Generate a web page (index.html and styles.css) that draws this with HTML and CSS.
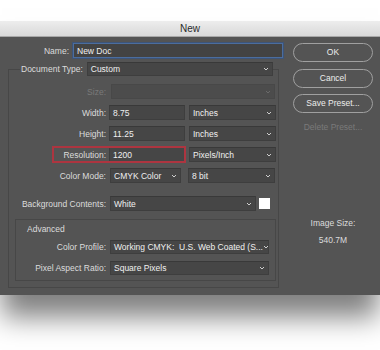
FILE: index.html
```html
<!DOCTYPE html>
<html>
	<head>
		<meta charset="UTF-8">
		<title>New</title>
		<link rel="stylesheet" href="styles.css">
	</head>
	<body>
		<div class="window">
			<div class="titlebar">New</div>
			<div class="dialog">
				<div class="form">
					<div class="row name-row">
						<span class="lbl">Name:</span>
						<div class="field focus">New Doc</div>
					</div>
					<fieldset class="group">
						<legend class="legend">
							<span class="lbl">Document Type:</span>
							<div class="field select doc">Custom<svg class="chev" viewBox="0 0 6 4"><path d="M1 1l2 2 2-2"/></svg></div>
						</legend>
						<div class="row first">
							<span class="lbl off">Size:</span>
							<div class="field select off size"><svg class="chev" viewBox="0 0 6 4"><path d="M1 1l2 2 2-2"/></svg></div>
						</div>
						<div class="row">
							<span class="lbl">Width:</span>
							<div class="field num">8.75</div>
							<div class="field select unit">Inches<svg class="chev" viewBox="0 0 6 4"><path d="M1 1l2 2 2-2"/></svg></div>
						</div>
						<div class="row">
							<span class="lbl">Height:</span>
							<div class="field num">11.25</div>
							<div class="field select unit">Inches<svg class="chev" viewBox="0 0 6 4"><path d="M1 1l2 2 2-2"/></svg></div>
						</div>
						<div class="row res">
							<span class="mark"></span>
							<span class="lbl">Resolution:</span>
							<div class="field num">1200</div>
							<div class="field select unit">Pixels/Inch<svg class="chev" viewBox="0 0 6 4"><path d="M1 1l2 2 2-2"/></svg></div>
						</div>
						<div class="row">
							<span class="lbl">Color Mode:</span>
							<div class="field select mode">CMYK Color<svg class="chev" viewBox="0 0 6 4"><path d="M1 1l2 2 2-2"/></svg></div>
							<div class="field select unit">8 bit<svg class="chev" viewBox="0 0 6 4"><path d="M1 1l2 2 2-2"/></svg></div>
						</div>
						<div class="row bg-row">
							<span class="lbl">Background Contents:</span>
							<div class="field select bg">White<svg class="chev" viewBox="0 0 6 4"><path d="M1 1l2 2 2-2"/></svg></div>
							<span class="swatch"></span>
						</div>
						<div class="advanced">
							<div class="adv-title">Advanced</div>
							<div class="row adv-row first">
								<span class="lbl">Color Profile:</span>
								<div class="field select wide">Working CMYK:&nbsp; U.S. Web Coated (S...<svg class="chev" viewBox="0 0 6 4"><path d="M1 1l2 2 2-2"/></svg></div>
							</div>
							<div class="row adv-row">
								<span class="lbl">Pixel Aspect Ratio:</span>
								<div class="field select wide">Square Pixels<svg class="chev" viewBox="0 0 6 4"><path d="M1 1l2 2 2-2"/></svg></div>
							</div>
						</div>
					</fieldset>
				</div>
				<div class="side">
					<div class="btn ok">OK</div>
					<div class="btn">Cancel</div>
					<div class="btn">Save Preset...</div>
					<div class="btn-off">Delete Preset...</div>
					<div class="size-title">Image Size:</div>
					<div class="size-val">540.7M</div>
				</div>
			</div>
		</div>
	</body>
</html>
```
FILE: styles.css
```css
*{
	margin: 0;
	padding: 0;
	box-sizing: border-box;
}
html,body{
	height: 100%;
}
body{
	background: #FFFFFF;
	font-family: "Liberation Sans", Arial, sans-serif;
	font-size: 8.5px;
	color: #dcdcdc;
}
.window{
	margin-top: 21px;
	width: 380px;
	box-shadow: 0 24px 26px -2px rgba(0,0,0,0.5);
}
.titlebar{
	height: 16px;
	line-height: 15px;
	text-align: center;
	font-size: 10px;
	color: #2b2b2b;
	background: linear-gradient(#ededed, #d9d9d9);
	border-bottom: 1px solid #a8a8a8;
}
.dialog{
	display: flex;
	height: 258px;
	background: #545454;
}
.form{
	width: 283px;
	padding-top: 6px;
}
.row{
	display: flex;
	align-items: center;
	height: 15px;
	margin-top: 6px;
	position: relative;
}
.row.first{
	margin-top: 0;
}
.lbl{
	flex: none;
	width: 97px;
	margin-right: 3px;
	text-align: right;
	white-space: nowrap;
}
.lbl.off{
	color: #7a7a7a;
}
.field{
	display: flex;
	align-items: center;
	height: 15px;
	padding: 0 3px;
	background: #464646;
	border: 1px solid #3e3e3e;
	border-top-color: #393939;
	color: #f0f0f0;
	white-space: nowrap;
	overflow: hidden;
}
.field.off{
	background: #4c4c4c;
	border-color: #484848;
}
.chev{
	flex: none;
	width: 6px;
	height: 4px;
	margin-left: auto;
	fill: none;
	stroke: #cfcfcf;
	stroke-width: 1;
}
.off .chev{
	stroke: #6a6a6a;
}
.name-row{
	margin-top: 0;
}
.name-row .lbl{
	width: 69px;
	margin-right: 4px;
}
.focus{
	width: 210px;
	background: #434343;
	border: 1px solid #4b6d9e;
	box-shadow: 0 0 0 1px #3d5478;
}
.group{
	margin: 4px 0 0 8px;
	width: 271px;
	padding: 8px 0 6px 0;
	border: 1px solid #474747;
}
.legend{
	display: flex;
	align-items: center;
	height: 14px;
	margin-left: 11px;
	padding: 0 0 0 1px;
}
.legend .lbl{
	width: auto;
	margin-right: 4px;
}
.doc{
	width: 186px;
	height: 14px;
}
.size{
	width: 164px;
	margin-left: 2px;
}
.num{
	width: 76px;
}
.unit{
	width: 87px;
	margin-left: 4px;
}
.mode{
	width: 71px;
	margin-left: 1px;
	margin-right: 3px;
}
.mark{
	position: absolute;
	left: 43px;
	top: -1px;
	width: 134px;
	height: 17px;
	border: 2px solid #ad3540;
}
.bg-row{
	margin-top: 13px;
}
.bg{
	width: 146px;
	margin-left: 1px;
}
.swatch{
	width: 11px;
	height: 11px;
	margin-left: 3px;
	background: #FFFFFF;
}
.advanced{
	margin: 8px 0 0 6px;
	width: 261px;
	height: 62px;
	padding: 3px 0 0 0;
	border: 1px solid #474747;
}
.adv-title{
	height: 12px;
	line-height: 12px;
	padding-left: 11px;
}
.adv-row{
	height: 14px;
	margin-top: 7px;
}
.adv-row.first{
	margin-top: 5px;
}
.adv-row .lbl{
	width: 90px;
	margin-right: 4px;
}
.wide{
	width: 159px;
	height: 14px;
}
.side{
	flex: 1;
	padding: 6px 0 0 10px;
}
.btn{
	width: 80px;
	height: 19px;
	line-height: 17px;
	margin-bottom: 6px;
	text-align: center;
	color: #ececec;
	border: 1px solid #a0a0a0;
	border-radius: 10px;
}
.btn.ok{
	margin-bottom: 7px;
}
.btn-off{
	width: 80px;
	height: 12px;
	line-height: 12px;
	margin-top: 8px;
	text-align: center;
	color: #7a7a7a;
}
.size-title{
	width: 80px;
	margin-top: 84px;
	line-height: 12px;
	text-align: center;
}
.size-val{
	width: 80px;
	margin-top: 5px;
	line-height: 12px;
	text-align: center;
}
```
